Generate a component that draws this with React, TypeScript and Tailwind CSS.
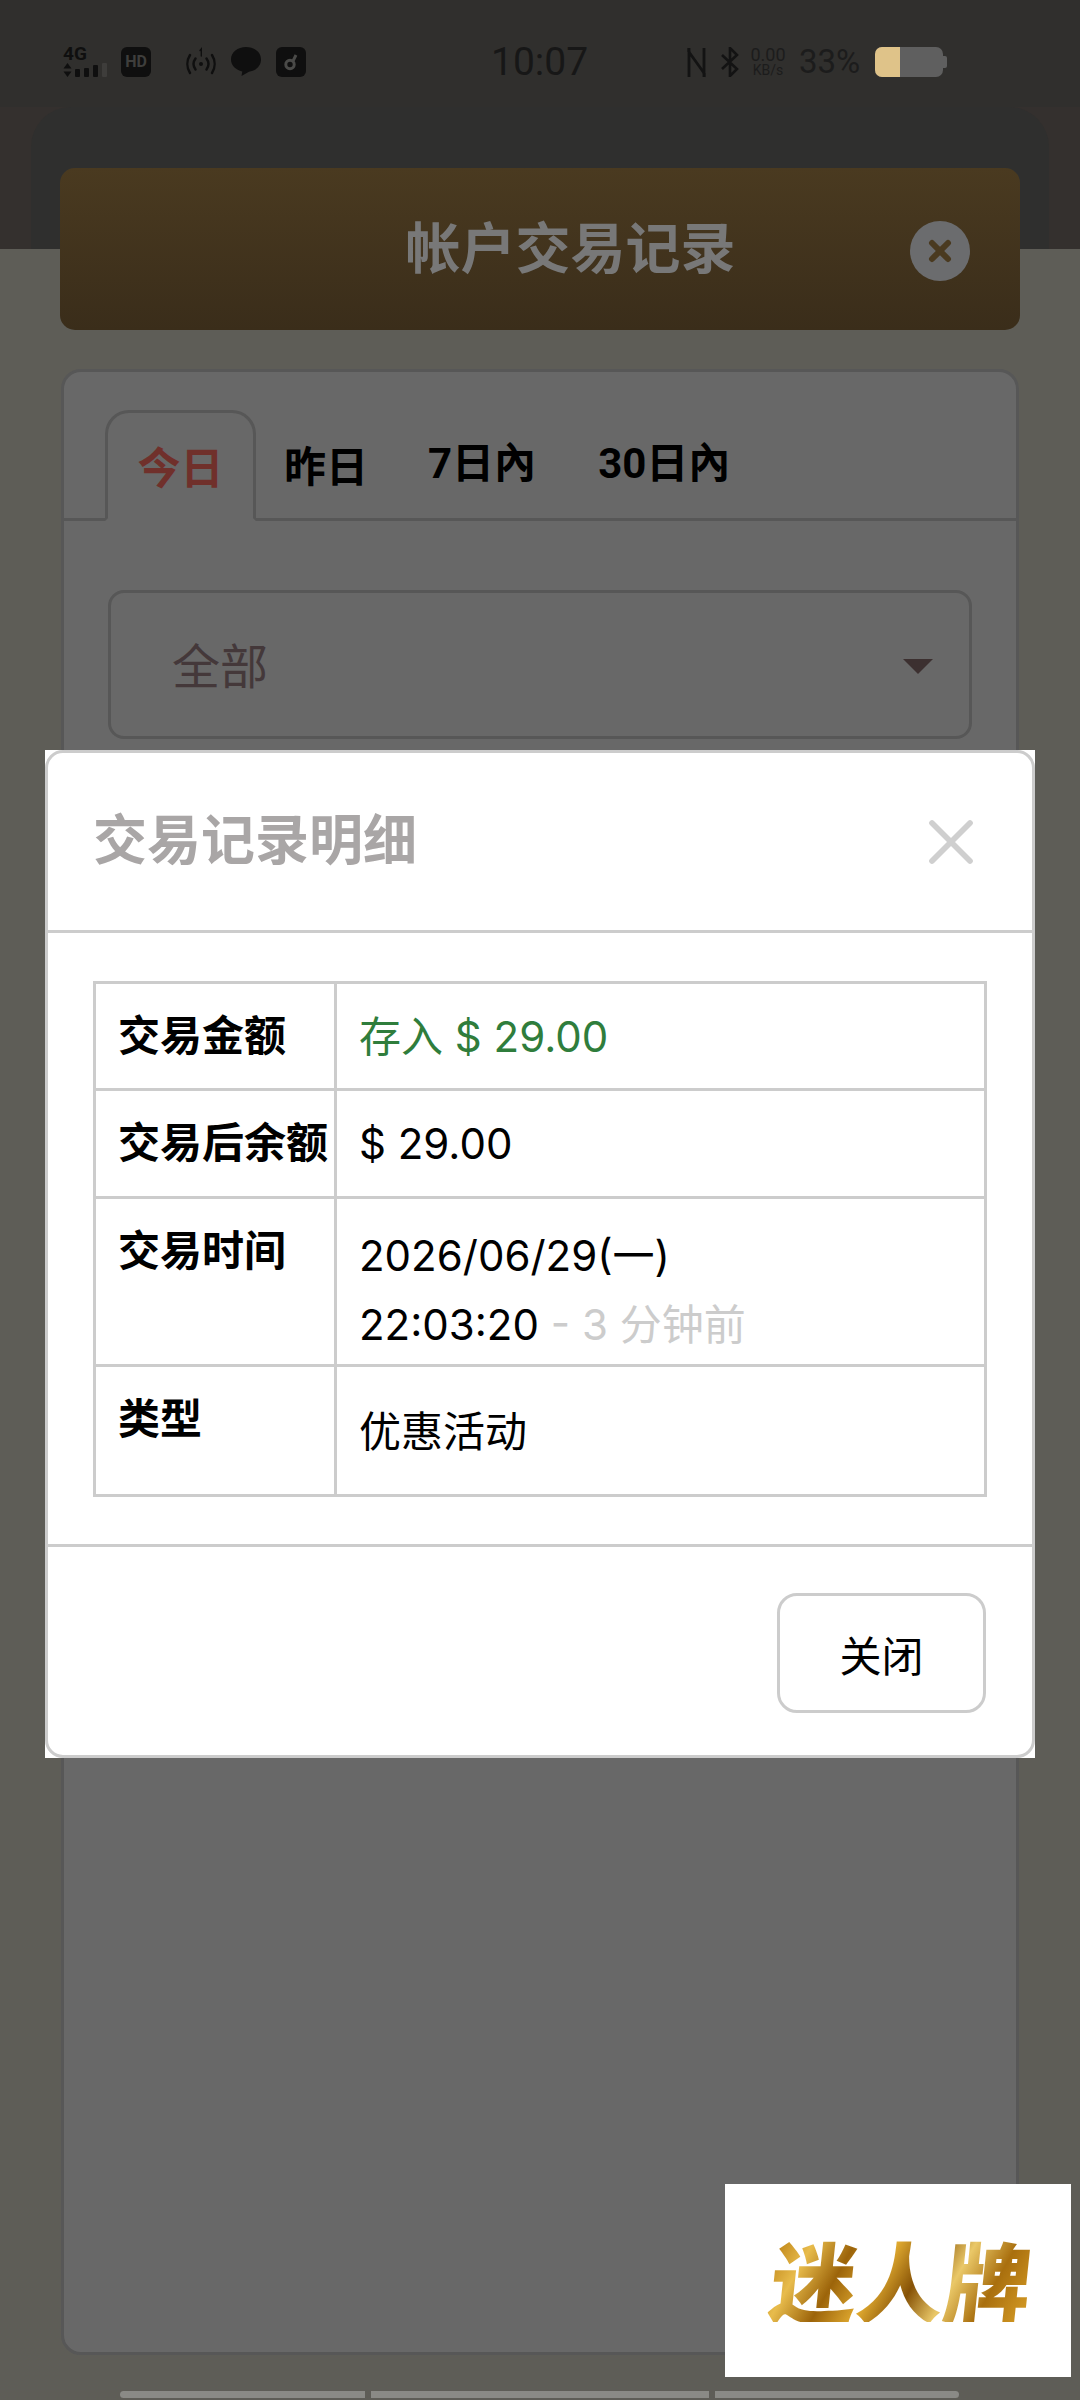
import React from 'react';
import { X } from 'lucide-react';

const latin = "font-['Inter','Noto_Sans_CJK_SC',sans-serif]";
const cjk = "font-['Noto_Sans_CJK_SC',sans-serif]";
const sysFont = "font-['Roboto',sans-serif]";
const tabFont = "font-['Roboto','Noto_Sans_CJK_SC',sans-serif]";

const StatusBar = () => (
  <div className="h-[107px] bg-[#302f2d] flex items-start pt-[46px] pl-[63px]">
    {/* left icons */}
    <div className="flex items-start w-[428px] h-[32px]">
      <div className="w-[48px] h-[31px] relative">
        <div className={`text-[19px] leading-[15px] font-bold text-[#0f0f0f] ${sysFont}`}>4G</div>
        <div className="flex items-end gap-[4px] mt-[2px] h-[14px]">
          <svg width="9" height="14" viewBox="0 0 9 14" fill="#0f0f0f" className="mr-[-1px]"><path d="M4.500 0l4 5.500H.5zM4.500 14l4-5.500H.5z" /></svg>
          <div className="w-[5px] h-[8px] bg-[#0f0f0f] rounded-[1px]" />
          <div className="w-[5px] h-[9px] bg-[#0f0f0f] rounded-[1px]" />
          <div className="w-[5px] h-[12px] bg-[#0f0f0f] rounded-[1px]" />
          <div className="w-[5px] h-[14px] bg-[#3e3d3b] rounded-[1px]" />
        </div>
      </div>
      <div className={`ml-[10px] mt-[1px] w-[30px] h-[30px] rounded-[6px] bg-[#0f0f0f] flex items-center justify-center text-[16px] font-bold text-[#3e3e3c] ${sysFont}`}>HD</div>
      <svg className="ml-[35px] mt-[1px]" width="30" height="30" viewBox="0 0 30 30" fill="none" stroke="#0f0f0f" strokeWidth="2.400" strokeLinecap="round">
        <circle cx="15" cy="17" r="2" fill="#0f0f0f" stroke="none" />
        <path d="M9.500 11.500c-2.400 3.300-2.400 7.700 0 11M20.500 11.500c2.400 3.300 2.400 7.700 0 11M4 8c-3.500 5.500-3.500 12.500 0 18M26 8c3.500 5.500 3.500 12.500 0 18" />
        <path d="M14 3.500L15.300 2v7" strokeWidth="1.400" />
      </svg>
      <svg className="ml-[15px] mt-[1px]" width="30" height="30" viewBox="0 0 30 30" fill="#0f0f0f"><path d="M15 0c8.300 0 15 5.200 15 12.500 0 6.400-5 11.300-12 12.300L10.500 29l.8-4.600C4.800 23 0 18.500 0 12.500 0 5.200 6.700 0 15 0z" /></svg>
      <div className="ml-[15px] mt-[1px] w-[30px] h-[30px] rounded-[6px] bg-[#0f0f0f] flex items-center justify-center">
        <svg width="20" height="20" viewBox="0 0 20 20" fill="none" stroke="#4a4a48" strokeWidth="3"><circle cx="9" cy="12.500" r="4.200" /><path d="M12 9l3-6" /></svg>
      </div>
    </div>
    {/* clock */}
    <div className={`w-[196px] -mt-[5px] text-[39px] leading-[42px] text-[#171717] ${sysFont}`}>10:07</div>
    {/* right icons */}
    <div className="flex items-center h-[32px]">
      <svg width="19" height="31" viewBox="0 0 19 31" fill="none" stroke="#131313" strokeWidth="2.800"><path d="M2 30V5l15 21V1" /><path d="M2 5V1M17 26v4" /></svg>
      <svg className="ml-[14px]" width="20" height="30" viewBox="0 0 20 30" fill="none" stroke="#131313" strokeWidth="2.600"><path d="M2 8l15 14-7 7V1l7 7L2 22" /></svg>
      <div className={`ml-[9px] w-[38px] text-center text-[#1c1c1c] ${sysFont}`}>
        <div className="text-[18px] leading-[16px]">0.00</div>
        <div className="text-[14px] leading-[14px]">KB/s</div>
      </div>
      <div className={`ml-[12px] w-[62px] text-[33px] leading-[32px] whitespace-nowrap text-[#1c1c1c] ${sysFont}`}>33%</div>
      <div className="ml-[14px] w-[68px] h-[30px] rounded-[7px] bg-[#5f5f5f] overflow-hidden">
        <div className="w-[25px] h-full bg-[#dfc389]" />
      </div>
      <div className="w-[4px] h-[12px] bg-[#5f5f5f] rounded-r-[2px]" />
    </div>
  </div>
);

const GoldHeader = () => (
  <div className="relative mx-[60px] -mt-[81px] h-[162px] rounded-[15px] bg-gradient-to-b from-[#4a3a20] to-[#3a2d1a] flex items-center justify-center">
    <h1 className={`text-[55px] leading-none font-bold text-[#787878] pl-[61px] pb-[10px] ${cjk}`}>帐户交易记录</h1>
    <div className="absolute right-[50px] top-[53px] w-[60px] h-[60px] rounded-full bg-[#6b6c6e] flex items-center justify-center">
      <X size={32} strokeWidth={4.500} className="text-[#4a3a20]" />
    </div>
  </div>
);

const cell = "border-[3px] border-[#cccccc] px-[22px] text-[42px] align-top";
const rowLabel = `${cell} font-bold text-black whitespace-nowrap overflow-hidden pt-[17px] ${cjk}`;

const DetailModal = () => (
  <div className="absolute left-[45px] top-[750px] w-[990px] h-[1008px] bg-white">
    <div className={`h-full border-[3px] border-[#cccccc] rounded-[18px] flex flex-col ${latin}`}>
      <div className="h-[180px] flex items-center justify-between pl-[45px] pr-[43px] border-b-[3px] border-[#cccccc]">
        <h2 className={`text-[54px] leading-none font-bold text-[#a9a6a6] pb-[10px] ${cjk}`}>交易记录明细</h2>
        <X size={76} strokeWidth={1.800} className="text-[#cfcfcf]" />
      </div>
      <div className="px-[45px] pt-[48px] h-[614px] border-b-[3px] border-[#cccccc]">
        <table className="w-[894px] table-fixed border-collapse">
          <colgroup>
            <col className="w-[241px]" />
            <col />
          </colgroup>
          <tbody>
            <tr className="h-[107px]">
              <td className={rowLabel}>交易金额</td>
              <td className={`${cell} pt-[21px] text-[#2f7d3c]`}>存入 $ 29.00</td>
            </tr>
            <tr className="h-[108px]">
              <td className={rowLabel}>交易后余额</td>
              <td className={`${cell} pt-[21px] text-black`}>$ 29.00</td>
            </tr>
            <tr className="h-[168px]">
              <td className={rowLabel}>交易时间</td>
              <td className={`${cell} pt-[22px] leading-[69px] text-black`}>
                2026/06/29(一)
                <br />
                22:03:20 <span className="text-[#cccccc]">- 3 分钟前</span>
              </td>
            </tr>
            <tr className="h-[130px]">
              <td className={rowLabel}>类型</td>
              <td className={`${cell} pt-[33px] text-black`}>优惠活动</td>
            </tr>
          </tbody>
        </table>
      </div>
      <div className="flex-1 flex justify-end items-start pt-[46px] pr-[46px]">
        <button className={`w-[209px] h-[120px] border-[3px] border-[#cccccc] rounded-[20px] text-[42px] text-black bg-white ${cjk}`}>关闭</button>
      </div>
    </div>
  </div>
);

const Logo = () => (
  <div className="absolute left-[725px] top-[2184px] w-[346px] h-[193px] bg-white flex items-center justify-center pl-[6px] pb-[4px]">
    <span className={`text-[87px] leading-none font-black -skew-x-6 text-transparent bg-clip-text bg-[linear-gradient(115deg,#b87c10_0%,#e8bc4c_14%,#9c640a_28%,#e0aa30_42%,#865206_55%,#eac868_68%,#a96f0e_82%,#d89e26_100%)] ${cjk}`}>
      迷人牌
    </span>
  </div>
);

export default function App() {
  return (
    <div className={`relative w-[1080px] h-[2400px] overflow-hidden bg-[#5e5d57] ${cjk}`}>
      <StatusBar />
      {/* brown band behind the rounded sheet */}
      <div className="h-[142px] bg-[#34302e]">
        <div className="mx-[31px] h-full rounded-t-[40px] bg-[#2f2f2e]" />
      </div>

      <GoldHeader />

      <div className="mx-[61px] mt-[39px] h-[1986px] bg-[#686868] border-[3px] border-[#575757] rounded-[20px] pt-[38px]">
        <div className="flex items-end h-[111px] border-b-[3px] border-[#575757] pl-[41px]">
          <div className="w-[151px] h-[111px] -mb-[3px] border-[3px] border-b-[#686868] border-[#575757] rounded-t-[24px] bg-[#686868] text-[#70302b] font-bold text-[43px] leading-none flex items-center justify-center">今日</div>
          <div className="pl-[28px] h-[108px] flex items-center font-bold text-[42px] leading-none text-black">昨日</div>
          <div className={`pl-[60px] h-[108px] flex items-center font-bold text-[42px] leading-none text-black ${tabFont}`}>7日內</div>
          <div className={`pl-[62px] h-[108px] flex items-center font-bold text-[42px] leading-none text-black ${tabFont}`}>30日內</div>
        </div>
        <div className="mx-[44px] mt-[69px] h-[149px] border-[3px] border-[#575757] rounded-[16px] flex items-center justify-between pl-[61px] pr-[36px] text-[48px] text-[#44383a]">
          <span className="pb-[4px]">全部</span>
          <div className="mt-[4px] w-0 h-0 border-x-[15px] border-x-transparent border-t-[15px] border-t-[#3c3030]" />
        </div>
      </div>

      <div className="mt-[36px] flex pl-[120px] gap-[6px]">
        <div className="w-[245px] h-[7px] rounded-l-[4px] bg-[#8a8a86]" />
        <div className="w-[338px] h-[7px] bg-[#8a8a86]" />
        <div className="w-[244px] h-[7px] rounded-r-[4px] bg-[#8a8a86]" />
      </div>

      <DetailModal />
      <Logo />
    </div>
  );
}
